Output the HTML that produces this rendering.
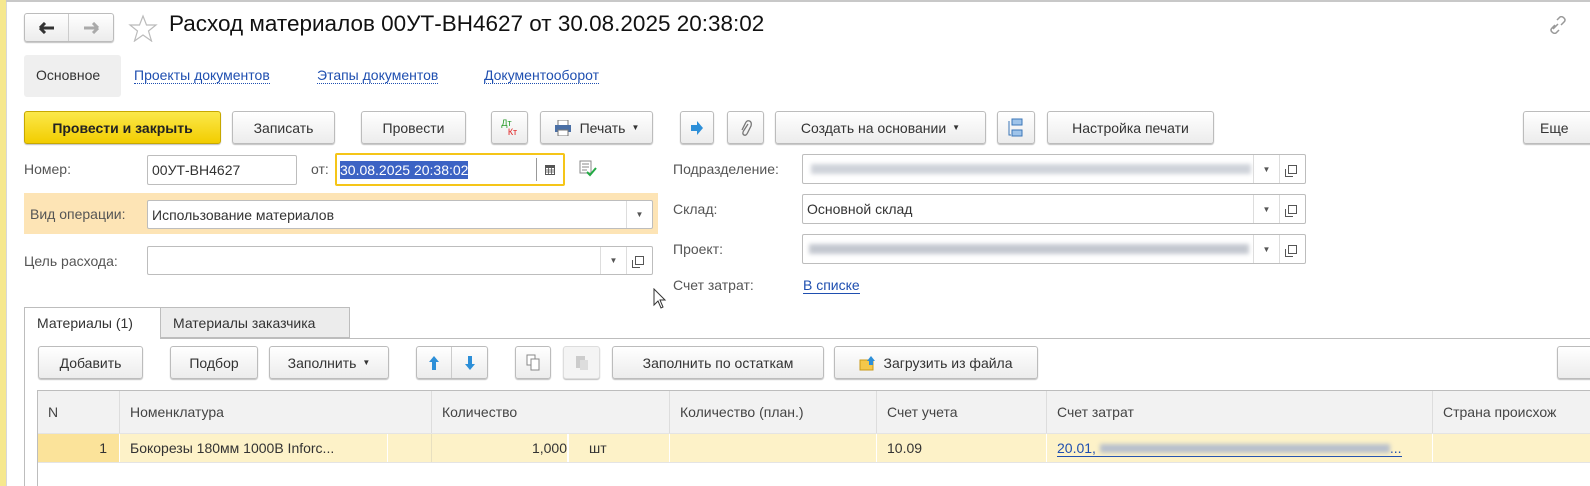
<!DOCTYPE html>
<html><head><meta charset="utf-8"><style>
*{box-sizing:border-box;margin:0;padding:0}
body{width:1590px;height:486px;overflow:hidden;background:#fff;font-family:"Liberation Sans",Arial,sans-serif;font-size:14px;color:#404040;position:relative}
.a{position:absolute}
.btn{position:absolute;height:33px;border:1px solid #bcbcbc;border-radius:3px;background:linear-gradient(#fff,#ececec);box-shadow:0 1px 1px rgba(0,0,0,.25);display:flex;align-items:center;justify-content:center;color:#333;white-space:nowrap}
.fld{position:absolute;height:30px;border:1px solid #bdbdbd;border-radius:2px;background:#fff;display:flex;align-items:center;padding-left:4px;color:#333;white-space:nowrap;overflow:hidden}
.lbl{position:absolute;color:#555}
.lnk{position:absolute;color:#1f4fb0;border-bottom:1px dotted #1f4fb0;line-height:16px}
.dd{position:absolute;top:0;bottom:0;width:26px;border-left:1px solid #ddd;display:flex;align-items:center;justify-content:center;font-size:8px;color:#555}
.op{position:absolute;top:0;bottom:0;width:26px;border-left:1px solid #ddd;display:flex;align-items:center;justify-content:center}
.op i{display:block;width:9px;height:9px;border:1px solid #555;position:relative}
.op i:after{content:"";position:absolute;left:-4px;top:3px;width:7px;height:7px;border-left:1px solid #555;border-bottom:1px solid #555}
.blur{position:absolute;height:10px;background:#cfd3da;filter:blur(2px)}
.th{position:absolute;top:391px;height:42px;background:#f2f2f2;border-right:1px solid #ddd;display:flex;align-items:center;padding-left:10px;color:#444;white-space:nowrap}
.td{position:absolute;top:434px;height:28px;background:#fdf2c8;border-right:1px solid #fff;display:flex;align-items:center;padding-left:10px;color:#333;white-space:nowrap}
</style></head><body>
<div class="a" style="left:0;top:0;width:6px;height:486px;background:#f6e88e"></div>
<div class="a" style="left:6px;top:0;width:1px;height:486px;background:#d8d8d8"></div>
<div class="a" style="left:6px;top:0;width:1584px;height:2px;background:#c8c8c8"></div>

<div class="btn" style="left:24px;top:13px;width:90px;height:29px;padding:0">
<div style="width:45px;height:100%;border-right:1px solid #ccc;display:flex;align-items:center;justify-content:center"><svg width="16" height="12"><path d="M1 6H15M1 6L6 1M1 6L6 11" stroke="#333" stroke-width="3" fill="none"/></svg></div>
<div style="width:45px;display:flex;align-items:center;justify-content:center"><svg width="16" height="12"><path d="M1 6H15M15 6L10 1M15 6L10 11" stroke="#aaa" stroke-width="3" fill="none"/></svg></div></div>
<svg class="a" style="left:128px;top:14px" width="30" height="28"><path d="M15 2L18.5 11H28L20.5 17L23.5 27L15 21L6.5 27L9.5 17L2 11H11.5Z" fill="none" stroke="#bbb" stroke-width="1.2"/></svg>
<div class="a" style="left:169px;top:11px;font-size:22.5px;color:#111;white-space:nowrap">Расход материалов 00УТ-ВН4627 от 30.08.2025 20:38:02</div>
<svg class="a" style="left:1550px;top:16px" width="20" height="18"><path d="M3 13L8 8M7 4L10 1Q12 0 14 2Q16 4 14 6L11 9M9 14L6 17Q4 18 2 16Q0 14 2 12L5 9" stroke="#999" stroke-width="1.5" fill="none"/></svg>

<div class="a" style="left:24px;top:55px;width:97px;height:42px;background:#efefef;border-radius:3px"></div>
<div class="a" style="left:36px;top:67px;color:#333">Основное</div>
<div class="lnk" style="left:134px;top:67px">Проекты документов</div>
<div class="lnk" style="left:317px;top:67px">Этапы документов</div>
<div class="lnk" style="left:484px;top:67px">Документооборот</div>

<div class="btn" style="left:24px;top:111px;width:197px;background:linear-gradient(#fbe84a,#f2cd00);border-color:#c7a800;color:#222;font-weight:bold">Провести и закрыть</div>
<div class="btn" style="left:232px;top:111px;width:103px">Записать</div>
<div class="btn" style="left:361px;top:111px;width:105px">Провести</div>
<div class="btn" style="left:491px;top:111px;width:37px;font-size:9px;flex-direction:column;line-height:9px"><span style="color:#2a9a2a;margin-right:6px">Дт</span><span style="color:#e02020;margin-left:6px">Кт</span></div>
<div class="btn" style="left:540px;top:111px;width:113px"><svg width="18" height="16" style="margin-right:8px"><rect x="4" y="0" width="10" height="6" fill="#fff" stroke="#777"/><rect x="1" y="5" width="16" height="7" fill="#4a6fa5"/><rect x="4" y="10" width="10" height="6" fill="#fff" stroke="#777"/></svg>Печать <span style="font-size:8px;margin-left:6px">▼</span></div>
<div class="btn" style="left:680px;top:111px;width:34px"><svg width="14" height="16"><path d="M1 5H7V1L13 8L7 15V11H1Z" fill="#2d8fd8"/></svg></div>
<div class="btn" style="left:727px;top:111px;width:37px"><svg width="12" height="18"><path d="M8 5L3.5 12Q2 15 4 16Q6 17 7.5 14L11 7Q12 3 9.5 2Q7 1 5.5 4L2 11" stroke="#777" stroke-width="1.3" fill="none"/></svg></div>
<div class="btn" style="left:775px;top:111px;width:211px">Создать на основании <span style="font-size:8px;margin-left:6px">▼</span></div>
<div class="btn" style="left:997px;top:111px;width:38px"><svg width="16" height="20"><rect x="4" y="1" width="10" height="6" fill="#9fc4ea" stroke="#3b76b8"/><rect x="4" y="12" width="10" height="6" fill="#9fc4ea" stroke="#3b76b8"/><path d="M1 3V17H3" stroke="#3b76b8" fill="none"/></svg></div>
<div class="btn" style="left:1047px;top:111px;width:167px">Настройка печати</div>
<div class="btn" style="left:1523px;top:111px;width:80px;justify-content:flex-start;padding-left:16px">Еще</div>

<div class="lbl" style="left:24px;top:161px">Номер:</div>
<div class="fld" style="left:147px;top:155px;width:150px">00УТ-ВН4627</div>
<div class="lbl" style="left:311px;top:161px">от:</div>
<div class="fld" style="left:335px;top:153px;width:230px;height:33px;border:2px solid #f5c518;padding-left:3px"><span style="background:#3c63c4;color:#fff;line-height:18px">30.08.2025 20:38:02</span>
<div style="position:absolute;right:0;top:3px;bottom:3px;width:27px;border-left:1px solid #999;display:flex;align-items:center;justify-content:center"><svg width="10" height="11"><rect x="0" y="1" width="10" height="10" fill="#555"/><rect x="1" y="4" width="8" height="6" fill="#fff"/><path d="M1 6H9M1 8H9M3.5 4V10M6.5 4V10" stroke="#555" stroke-width=".8"/></svg></div></div>
<svg class="a" style="left:579px;top:160px" width="18" height="17"><rect x="1" y="1" width="11" height="12" fill="#fff" stroke="#8a8a8a"/><path d="M3 4H10M3 7H10M3 10H8" stroke="#8a8a8a"/><path d="M8 12L11 15L17 8" stroke="#22aa44" stroke-width="2" fill="none"/></svg>

<div class="a" style="left:24px;top:193px;width:634px;height:41px;background:#fde4b5"></div>
<div class="lbl" style="left:30px;top:206px">Вид операции:</div>
<div class="fld" style="left:147px;top:200px;width:506px;height:29px">Использование материалов<div class="dd" style="right:0">▼</div></div>
<div class="lbl" style="left:24px;top:253px">Цель расхода:</div>
<div class="fld" style="left:147px;top:246px;width:506px;height:29px"><div class="dd" style="right:26px">▼</div><div class="op" style="right:0"><i></i></div></div>

<div class="lbl" style="left:673px;top:161px">Подразделение:</div>
<div class="fld" style="left:802px;top:154px;width:504px;height:30px"><div class="blur" style="left:8px;top:9px;width:440px"></div><div class="dd" style="right:26px">▼</div><div class="op" style="right:0"><i></i></div></div>
<div class="lbl" style="left:673px;top:201px">Склад:</div>
<div class="fld" style="left:802px;top:194px;width:504px;height:30px">Основной склад<div class="dd" style="right:26px">▼</div><div class="op" style="right:0"><i></i></div></div>
<div class="lbl" style="left:673px;top:241px">Проект:</div>
<div class="fld" style="left:802px;top:234px;width:504px;height:30px"><div class="blur" style="left:6px;top:9px;width:440px;background:#c4c8d0"></div><div class="dd" style="right:26px">▼</div><div class="op" style="right:0"><i></i></div></div>
<div class="lbl" style="left:673px;top:277px">Счет затрат:</div>
<div class="a" style="left:803px;top:277px;color:#1f4fb0;border-bottom:1px solid #1f4fb0;line-height:16px">В списке</div>
<svg class="a" style="left:653px;top:288px" width="14" height="22"><path d="M1 1V17L5 13L8 20L10 19L7 12H12Z" fill="#fff" stroke="#333"/></svg>

<div class="a" style="left:24px;top:338px;width:1566px;height:1px;background:#bdbdbd"></div>
<div class="a" style="left:24px;top:307px;width:1px;height:179px;background:#bdbdbd"></div>
<div class="a" style="left:24px;top:307px;width:137px;height:32px;border:1px solid #bdbdbd;border-bottom:none;background:#fff;padding:7px 0 0 12px;color:#333">Материалы (1)</div>
<div class="a" style="left:161px;top:307px;width:189px;height:31px;border:1px solid #bdbdbd;border-left:none;background:#ececec;padding:7px 0 0 12px;color:#333">Материалы заказчика</div>

<div class="btn" style="left:38px;top:346px;width:105px">Добавить</div>
<div class="btn" style="left:170px;top:346px;width:88px">Подбор</div>
<div class="btn" style="left:269px;top:346px;width:120px">Заполнить <span style="font-size:8px;margin-left:6px">▼</span></div>
<div class="btn" style="left:416px;top:346px;width:72px;padding:0"><div style="width:36px;height:100%;border-right:1px solid #ccc;display:flex;align-items:center;justify-content:center"><svg width="12" height="16"><path d="M6 1L11 7H8V15H4V7H1Z" fill="#2d8fd8"/></svg></div><div style="width:36px;display:flex;align-items:center;justify-content:center"><svg width="12" height="16"><path d="M6 15L11 9H8V1H4V9H1Z" fill="#2d8fd8"/></svg></div></div>
<div class="btn" style="left:515px;top:346px;width:36px"><svg width="14" height="17"><rect x="1" y="1" width="8" height="10" fill="#fff" stroke="#888"/><rect x="5" y="5" width="8" height="11" fill="#fff" stroke="#888"/></svg></div>
<div class="btn" style="left:563px;top:346px;width:37px;background:#f4f4f4;border-color:#ddd"><svg width="14" height="17"><rect x="1" y="2" width="9" height="12" fill="#ccc"/><rect x="5" y="6" width="8" height="10" fill="#ddd"/></svg></div>
<div class="btn" style="left:612px;top:346px;width:212px">Заполнить по остаткам</div>
<div class="btn" style="left:834px;top:346px;width:204px"><svg width="18" height="16" style="margin-right:6px"><rect x="1" y="5" width="13" height="10" fill="#f5c84a" stroke="#c99a1a"/><path d="M12 1L16 6H14V10H10V6H8Z" fill="#2d8fd8"/></svg>Загрузить из файла</div>
<div class="btn" style="left:1557px;top:346px;width:60px"></div>

<div class="a" style="left:38px;top:390px;width:1552px;height:1px;background:#bdbdbd"></div>
<div class="a" style="left:37px;top:390px;width:1px;height:96px;background:#bdbdbd"></div>
<div class="th" style="left:38px;width:82px">N</div>
<div class="th" style="left:120px;width:312px">Номенклатура</div>
<div class="th" style="left:432px;width:238px">Количество</div>
<div class="th" style="left:670px;width:207px">Количество (план.)</div>
<div class="th" style="left:877px;width:170px">Счет учета</div>
<div class="th" style="left:1047px;width:386px">Счет затрат</div>
<div class="th" style="left:1433px;width:157px;border-right:none">Страна происхож</div>
<div class="a" style="left:38px;top:433px;width:1552px;height:1px;background:#e4e4e4"></div>
<div class="td" style="left:38px;width:82px;background:#fbe39a;justify-content:flex-end;padding-right:12px">1</div>
<div class="td" style="left:120px;width:268px">Бокорезы 180мм 1000В Inforc...</div>
<div class="td" style="left:388px;width:44px;border-right:1px solid #e8e0c0"></div>
<div class="td" style="left:432px;width:136px;justify-content:flex-end;padding-right:0">1,000</div>
<div class="td" style="left:568px;width:102px;padding-left:20px;border-left:1px solid #fff">шт</div>
<div class="td" style="left:670px;width:207px"></div>
<div class="td" style="left:877px;width:170px">10.09</div>
<div class="td" style="left:1047px;width:386px"><span style="color:#1f4fb0;border-bottom:1px solid #1f4fb0;line-height:16px">20.01, <span style="display:inline-block;width:290px;height:9px;background:#b8c0cc;filter:blur(2px)"></span>...</span></div>
<div class="td" style="left:1433px;width:157px;border-right:none"></div>
<div class="a" style="left:38px;top:462px;width:1552px;height:1px;background:#e4e4e4"></div>
</body></html>
